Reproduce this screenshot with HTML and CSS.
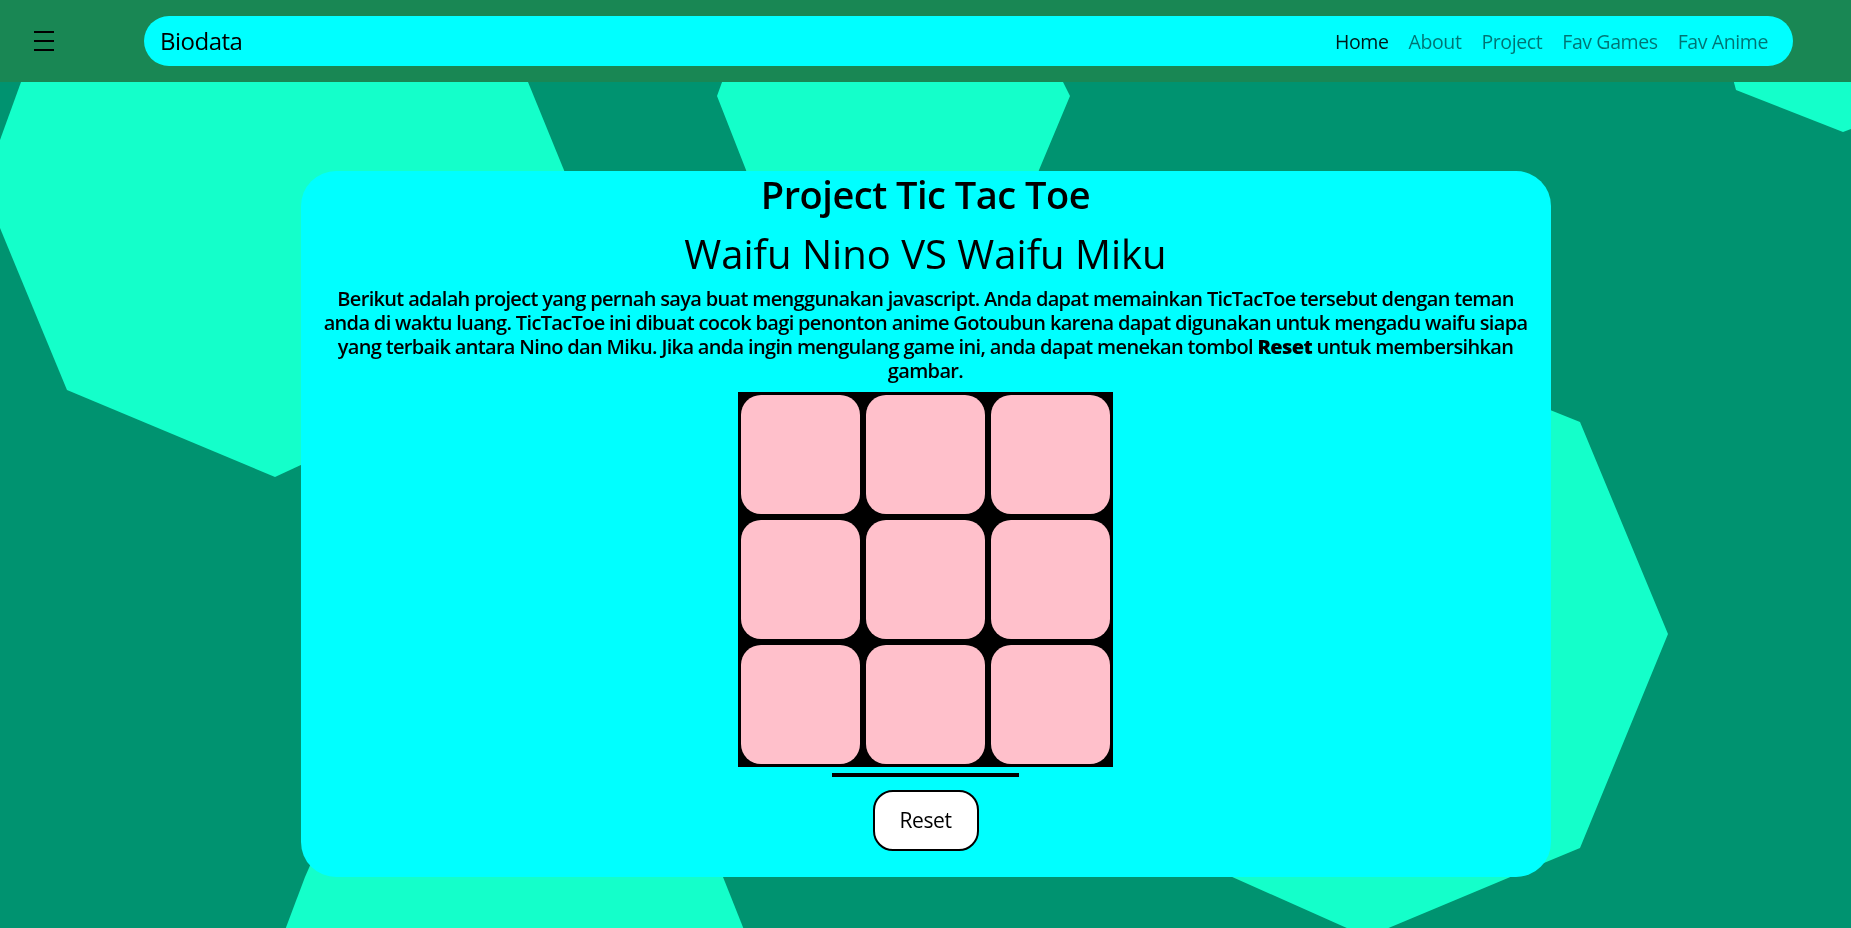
FILE: index.html
```html
<!DOCTYPE html>
<html lang="id">
<head>
<meta charset="utf-8">
<title>Biodata - Project</title>
<link rel="stylesheet" href="styles.css">
</head>
<body>
<svg class="bg-shapes" viewBox="0 0 1851 928" preserveAspectRatio="none" aria-hidden="true">
  <polygon points="29,60 519,60 617,300 400,419 275,477 67,390 -17,187"/>
  <polygon points="730,60 1052,60 1070,96 1039,170 1000,300 780,300 746,170 717,96"/>
  <polygon points="1728,60 1900,60 1900,110 1843,132 1736,90"/>
  <polygon points="1450,370 1580,422 1668,634 1580,848 1508,878 1367,937 1100,818"/>
  <polygon points="330,820 700,820 723,877 760,970 270,970 305,877"/>
</svg>

<header class="topbar">
  <button class="toggler" type="button" aria-label="Menu">
    <span></span><span></span><span></span>
  </button>
  <nav class="pill">
    <a class="brand" href="#">Biodata</a>
    <ul class="links">
      <li><a class="link active" href="#">Home</a></li>
      <li><a class="link" href="#">About</a></li>
      <li><a class="link" href="#">Project</a></li>
      <li><a class="link" href="#">Fav Games</a></li>
      <li><a class="link" href="#">Fav Anime</a></li>
    </ul>
  </nav>
</header>

<main class="card">
  <h1 class="title">Project Tic Tac Toe</h1>
  <h2 class="subtitle">Waifu Nino VS Waifu Miku</h2>
  <p class="desc">Berikut adalah project yang pernah saya buat menggunakan javascript. Anda dapat memainkan TicTacToe tersebut dengan teman<br>anda di waktu luang. TicTacToe ini dibuat cocok bagi penonton anime Gotoubun karena dapat digunakan untuk mengadu waifu siapa<br>yang terbaik antara Nino dan Miku. Jika anda ingin mengulang game ini, anda dapat menekan tombol <b>Reset</b> untuk membersihkan<br>gambar.</p>
  <div class="board">
    <div class="cell"></div><div class="cell"></div><div class="cell"></div>
    <div class="cell"></div><div class="cell"></div><div class="cell"></div>
    <div class="cell"></div><div class="cell"></div><div class="cell"></div>
  </div>
  <div class="bar"></div>
  <button class="reset" type="button">Reset</button>
</main>
</body>
</html>
```

FILE: styles.css
```css
* { box-sizing: border-box; }

html, body {
  margin: 0;
  padding: 0;
}

body {
  background: #009370;
  min-height: 100vh;
  font-family: "Open Sans", "Noto Sans", "DejaVu Sans", sans-serif;
  color: #000;
}

.bg-shapes {
  position: fixed;
  top: 0;
  left: 0;
  width: 100%;
  height: 100%;
  z-index: -1;
}

.bg-shapes polygon {
  fill: #14ffca;
}

/* ---------- top bar ---------- */
.topbar {
  height: 82px;
  background: #198754;
  display: grid;
  grid-template-columns: 110px 1fr;
  align-items: center;
  padding: 0 58px 0 34px;
}

.toggler {
  width: 20px;
  height: 20px;
  padding: 0;
  border: 0;
  background: transparent;
  display: flex;
  flex-direction: column;
  justify-content: space-between;
  margin-top: -1px;
}

.toggler span {
  display: block;
  width: 20px;
  height: 2px;
  background: #000;
}

.pill {
  height: 50px;
  border-radius: 25px;
  background: #00ffff;
  display: flex;
  align-items: center;
  justify-content: space-between;
  padding: 0 15px 0 16px;
}

.brand {
  font-size: 24px;
  letter-spacing: -0.5px;
  color: #000;
  text-decoration: none;
  margin-top: -1px;
}

.links {
  list-style: none;
  margin: 0;
  padding: 0;
  display: flex;
}

.link {
  display: block;
  padding: 0 10px;
  font-size: 19.5px;
  letter-spacing: -0.4px;
  color: rgba(0, 0, 0, 0.55);
  text-decoration: none;
}

.link.active {
  color: rgba(0, 0, 0, 0.9);
}

/* ---------- card ---------- */
.card {
  width: 1250px;
  margin: 89px auto 0;
  background: #00ffff;
  border-radius: 35px;
  padding: 1px 18px 26px;
  display: flex;
  flex-direction: column;
  align-items: center;
  text-align: center;
}

.title {
  margin: 0;
  font-size: 38px;
  line-height: 1.2;
  font-weight: 600;
  letter-spacing: -0.5px;
}

.subtitle {
  margin: 12px 0 0;
  font-size: 40px;
  line-height: 1.2;
  font-weight: 500;
  letter-spacing: 0;
}

.desc {
  margin: 9px 0 0;
  font-size: 20px;
  line-height: 24px;
  font-weight: 600;
  letter-spacing: -0.67px;
}

.desc b {
  font-weight: 800;
}

.board {
  margin-top: 9px;
  width: 375px;
  height: 375px;
  background: #000;
  padding: 3px;
  display: grid;
  grid-template-columns: repeat(3, 1fr);
  grid-template-rows: repeat(3, 1fr);
  gap: 6px;
}

.cell {
  background: #ffc0cb;
  border-radius: 20px;
}

.bar {
  width: 187px;
  height: 4px;
  background: #000;
  margin-top: 6px;
}

.reset {
  margin-top: 13px;
  width: 106px;
  height: 61px;
  border: 2px solid #000;
  border-radius: 20px;
  background: #fff;
  font-family: inherit;
  font-size: 21px;
  letter-spacing: -0.4px;
  color: #000;
  padding: 0;
}
```
